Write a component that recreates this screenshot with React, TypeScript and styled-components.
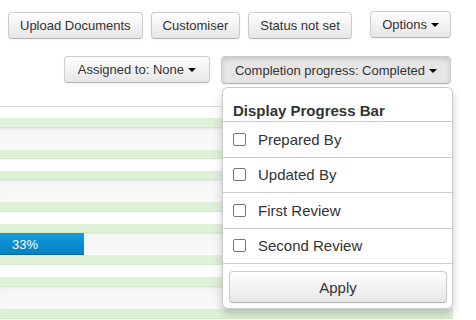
import styled, { createGlobalStyle } from 'styled-components';

const GlobalStyle = createGlobalStyle`
  html, body {
    margin: 0;
    padding: 0;
    background: #fff;
  }
  body {
    font-family: "Liberation Sans", Arial, sans-serif;
    color: #333;
    overflow: hidden;
  }
`;

const Page = styled.div`
  width: 476px;
  height: 320px;
  overflow: hidden;
  display: flex;
  flex-direction: column;
`;

const TopBar = styled.div`
  display: flex;
  align-items: flex-start;
  gap: 8px;
  padding: 12px 25px 0 8px;
`;

const FilterBar = styled.div`
  display: flex;
  justify-content: flex-end;
  gap: 11px;
  padding-right: 25px;
  margin-top: 17px;
`;

const Button = styled.button<{ $active?: boolean; $push?: boolean; $wide?: boolean }>`
  font-family: "Liberation Sans", Arial, sans-serif;
  font-size: 13px;
  color: #333;
  height: ${(p) => (p.$active ? 28 : 27)}px;
  padding: 0 ${(p) => (p.$wide ? 13 : 11)}px;
  border-radius: 4px;
  border: 1px solid #ccc;
  border-bottom-color: #b3b3b3;
  background: ${(p) =>
    p.$active ? '#e6e6e6' : 'linear-gradient(to bottom, #ffffff, #e6e6e6)'};
  box-shadow: ${(p) =>
    p.$active
      ? 'inset 0 2px 4px rgba(0,0,0,0.15), 0 1px 2px rgba(0,0,0,0.05)'
      : 'inset 0 1px 0 rgba(255,255,255,0.2), 0 1px 2px rgba(0,0,0,0.05)'};
  display: inline-flex;
  align-items: center;
  justify-content: center;
  gap: 4px;
  white-space: nowrap;
  cursor: pointer;
  margin-left: ${(p) => (p.$push ? 'auto' : '0')};
  margin-top: ${(p) => (p.$push ? '-1px' : '0')};
`;

const Caret = styled.span`
  display: inline-block;
  width: 0;
  height: 0;
  border-top: 4px solid #000;
  border-left: 4px solid transparent;
  border-right: 4px solid transparent;
  margin-top: 1px;
`;

const DropdownWrap = styled.div`
  position: relative;
  display: flex;
`;

const Menu = styled.div`
  position: absolute;
  top: 31px;
  right: -2px;
  width: 229px;
  background: #fff;
  border: 1px solid rgba(0, 0, 0, 0.2);
  border-radius: 6px;
  box-shadow: 0 5px 10px rgba(0, 0, 0, 0.2);
  z-index: 10;
  display: flex;
  flex-direction: column;
`;

const MenuHeader = styled.div`
  font-size: 15px;
  font-weight: 700;
  color: #333;
  padding: 13px 10px 0;
  height: 20px;
  line-height: 20px;
  border-bottom: 1px solid #ccc;
`;

const MenuItem = styled.label`
  display: flex;
  align-items: center;
  height: 34.5px;
  padding: 0 10px;
  border-bottom: 1px solid #ccc;
  font-size: 15px;
  color: #333;
  gap: 12px;
`;

const Check = styled.span`
  width: 11px;
  height: 11px;
  border: 1px solid #767676;
  border-radius: 2px;
  background: #fff;
  flex-shrink: 0;
`;

const MenuFooter = styled.div`
  padding: 7px 5px 5px 6px;
`;

const ApplyButton = styled.button`
  width: 100%;
  height: 32px;
  font-family: "Liberation Sans", Arial, sans-serif;
  font-size: 15px;
  color: #333;
  border: 1px solid #ccc;
  border-bottom-color: #b3b3b3;
  border-radius: 4px;
  background: linear-gradient(to bottom, #ffffff, #e6e6e6);
  box-shadow: 0 1px 2px rgba(0, 0, 0, 0.05);
`;

const Table = styled.div`
  margin-top: 22px;
  width: 453px;
  border-top: 1px solid #ddd;
  display: flex;
  flex-direction: column;
`;

const Band = styled.div<{ $tone: 'white' | 'green' | 'gray'; $h: number }>`
  height: ${(p) => p.$h}px;
  flex-shrink: 0;
  background: ${(p) =>
    p.$tone === 'green'
      ? '#dff0d8'
      : p.$tone === 'gray'
      ? 'linear-gradient(to bottom, #f5f5f5, #f9f9f9)'
      : '#fff'};
  box-shadow: ${(p) =>
    p.$tone === 'gray'
      ? 'inset 0 1px 2px rgba(0,0,0,0.06)'
      : p.$tone === 'green'
      ? 'inset 0 -1px 0 #d6e9c6'
      : 'none'};
  display: flex;
`;

const Bar = styled.div`
  height: 100%;
  background: linear-gradient(to bottom, #149bdf, #0480be);
  box-shadow: inset 0 -1px 0 rgba(0, 0, 0, 0.15);
  color: #fff;
  font-size: 13px;
  display: flex;
  align-items: center;
  padding-left: 12px;
  box-sizing: border-box;
`;

type Stripe = { tone: 'white' | 'green' | 'gray'; h: number; progress?: number };

const STRIPES: Stripe[] = [
  { tone: 'white', h: 11 },
  { tone: 'green', h: 10 },
  { tone: 'gray', h: 22 },
  { tone: 'green', h: 9 },
  { tone: 'white', h: 12 },
  { tone: 'green', h: 9 },
  { tone: 'gray', h: 22 },
  { tone: 'green', h: 10 },
  { tone: 'white', h: 12 },
  { tone: 'green', h: 9 },
  { tone: 'gray', h: 22, progress: 33 },
  { tone: 'green', h: 10 },
  { tone: 'white', h: 12 },
  { tone: 'green', h: 10 },
  { tone: 'gray', h: 22 },
  { tone: 'green', h: 10 },
];

const OPTIONS = ['Prepared By', 'Updated By', 'First Review', 'Second Review'];

export default function App() {
  return (
    <Page>
      <GlobalStyle />
      <TopBar>
        <Button>Upload Documents</Button>
        <Button>Customiser</Button>
        <Button>Status not set</Button>
        <Button $push>
          Options <Caret />
        </Button>
      </TopBar>

      <FilterBar>
        <Button $wide>
          Assigned to: None <Caret />
        </Button>
        <DropdownWrap>
          <Button $active $wide>
            Completion progress: Completed <Caret />
          </Button>
          <Menu>
            <MenuHeader>Display Progress Bar</MenuHeader>
            {OPTIONS.map((o) => (
              <MenuItem key={o}>
                <Check />
                {o}
              </MenuItem>
            ))}
            <MenuFooter>
              <ApplyButton>Apply</ApplyButton>
            </MenuFooter>
          </Menu>
        </DropdownWrap>
      </FilterBar>

      <Table>
        {STRIPES.map((s, i) => (
          <Band key={i} $tone={s.tone} $h={s.h}>
            {s.progress !== undefined && (
              <Bar style={{ width: 84 }}>{s.progress}%</Bar>
            )}
          </Band>
        ))}
      </Table>
    </Page>
  );
}
